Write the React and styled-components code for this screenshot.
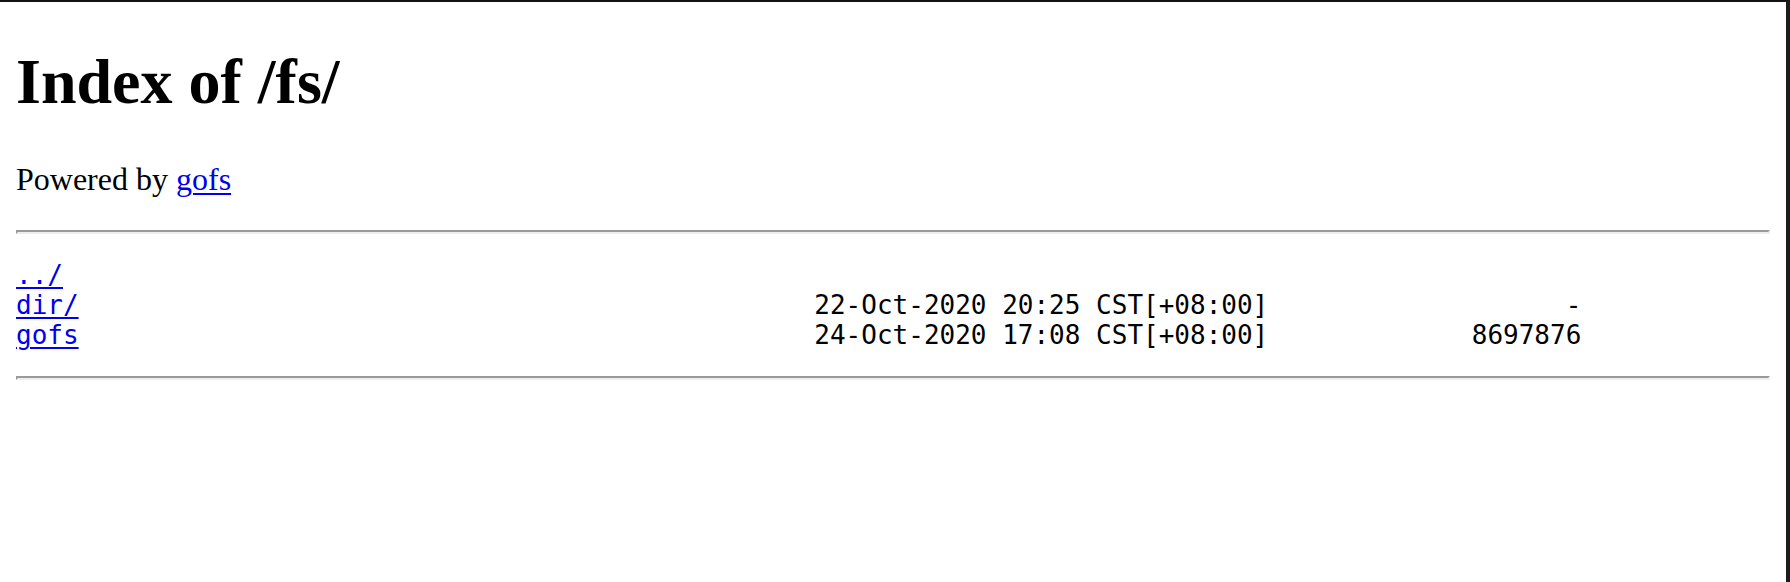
import React from 'react';
import styled, { createGlobalStyle } from 'styled-components';

const GlobalStyle = createGlobalStyle`
  html, body {
    margin: 0;
    padding: 0;
    background: #ffffff;
  }
`;

const Frame = styled.div`
  box-sizing: border-box;
  min-height: 100vh;
  background: #ffffff;
  border-top: 2px solid #141414;
  border-right: 4px solid #1c1c1c;
  padding: 0 16px;
  font-family: "Liberation Serif", "Times New Roman", serif;
  color: #000000;
  overflow: hidden;
`;

const Title = styled.h1`
  font-size: 64px;
  font-weight: 700;
  line-height: 1.15;
  margin: 42.88px 0;
`;

const Credit = styled.p`
  font-size: 32px;
  line-height: 1.15;
  margin: 32px 0;
`;

const Link = styled.a`
  color: #0000ee;
  text-decoration: underline;
  text-decoration-thickness: ${({ $mono }) => ($mono ? '2px' : '2px')};
  text-underline-offset: ${({ $mono }) => ($mono ? '3px' : '3px')};
`;

const Rule = styled.hr`
  margin: 16px 0;
  height: 0;
  border-style: solid;
  border-width: 2px;
  border-color: #9a9a9a #eeeeee #eeeeee #9a9a9a;
`;

const Listing = styled.div`
  margin: 26px 0;
  font-family: "DejaVu Sans Mono", "Liberation Mono", monospace;
  font-size: 26px;
  line-height: normal;
  white-space: pre;
`;

const Row = styled.div`
  display: grid;
  grid-template-columns: 51ch 29ch 20ch;
`;

const Size = styled.span`
  text-align: right;
`;

const entries = [
  { name: '../', date: '', size: '' },
  { name: 'dir/', date: '22-Oct-2020 20:25 CST[+08:00]', size: '-' },
  { name: 'gofs', date: '24-Oct-2020 17:08 CST[+08:00]', size: '8697876' },
];

const App = () => {
  return (
    <>
      <GlobalStyle />
      <Frame>
        <Title>Index of /fs/</Title>
        <Credit>
          Powered by <Link href="#">gofs</Link>
        </Credit>
        <Rule />
        <Listing>
          {entries.map((e) => (
            <Row key={e.name}>
              <span>
                <Link href="#" $mono>{e.name}</Link>
              </span>
              <span>{e.date}</span>
              <Size>{e.size}</Size>
            </Row>
          ))}
        </Listing>
        <Rule />
      </Frame>
    </>
  );
};

export default App;
